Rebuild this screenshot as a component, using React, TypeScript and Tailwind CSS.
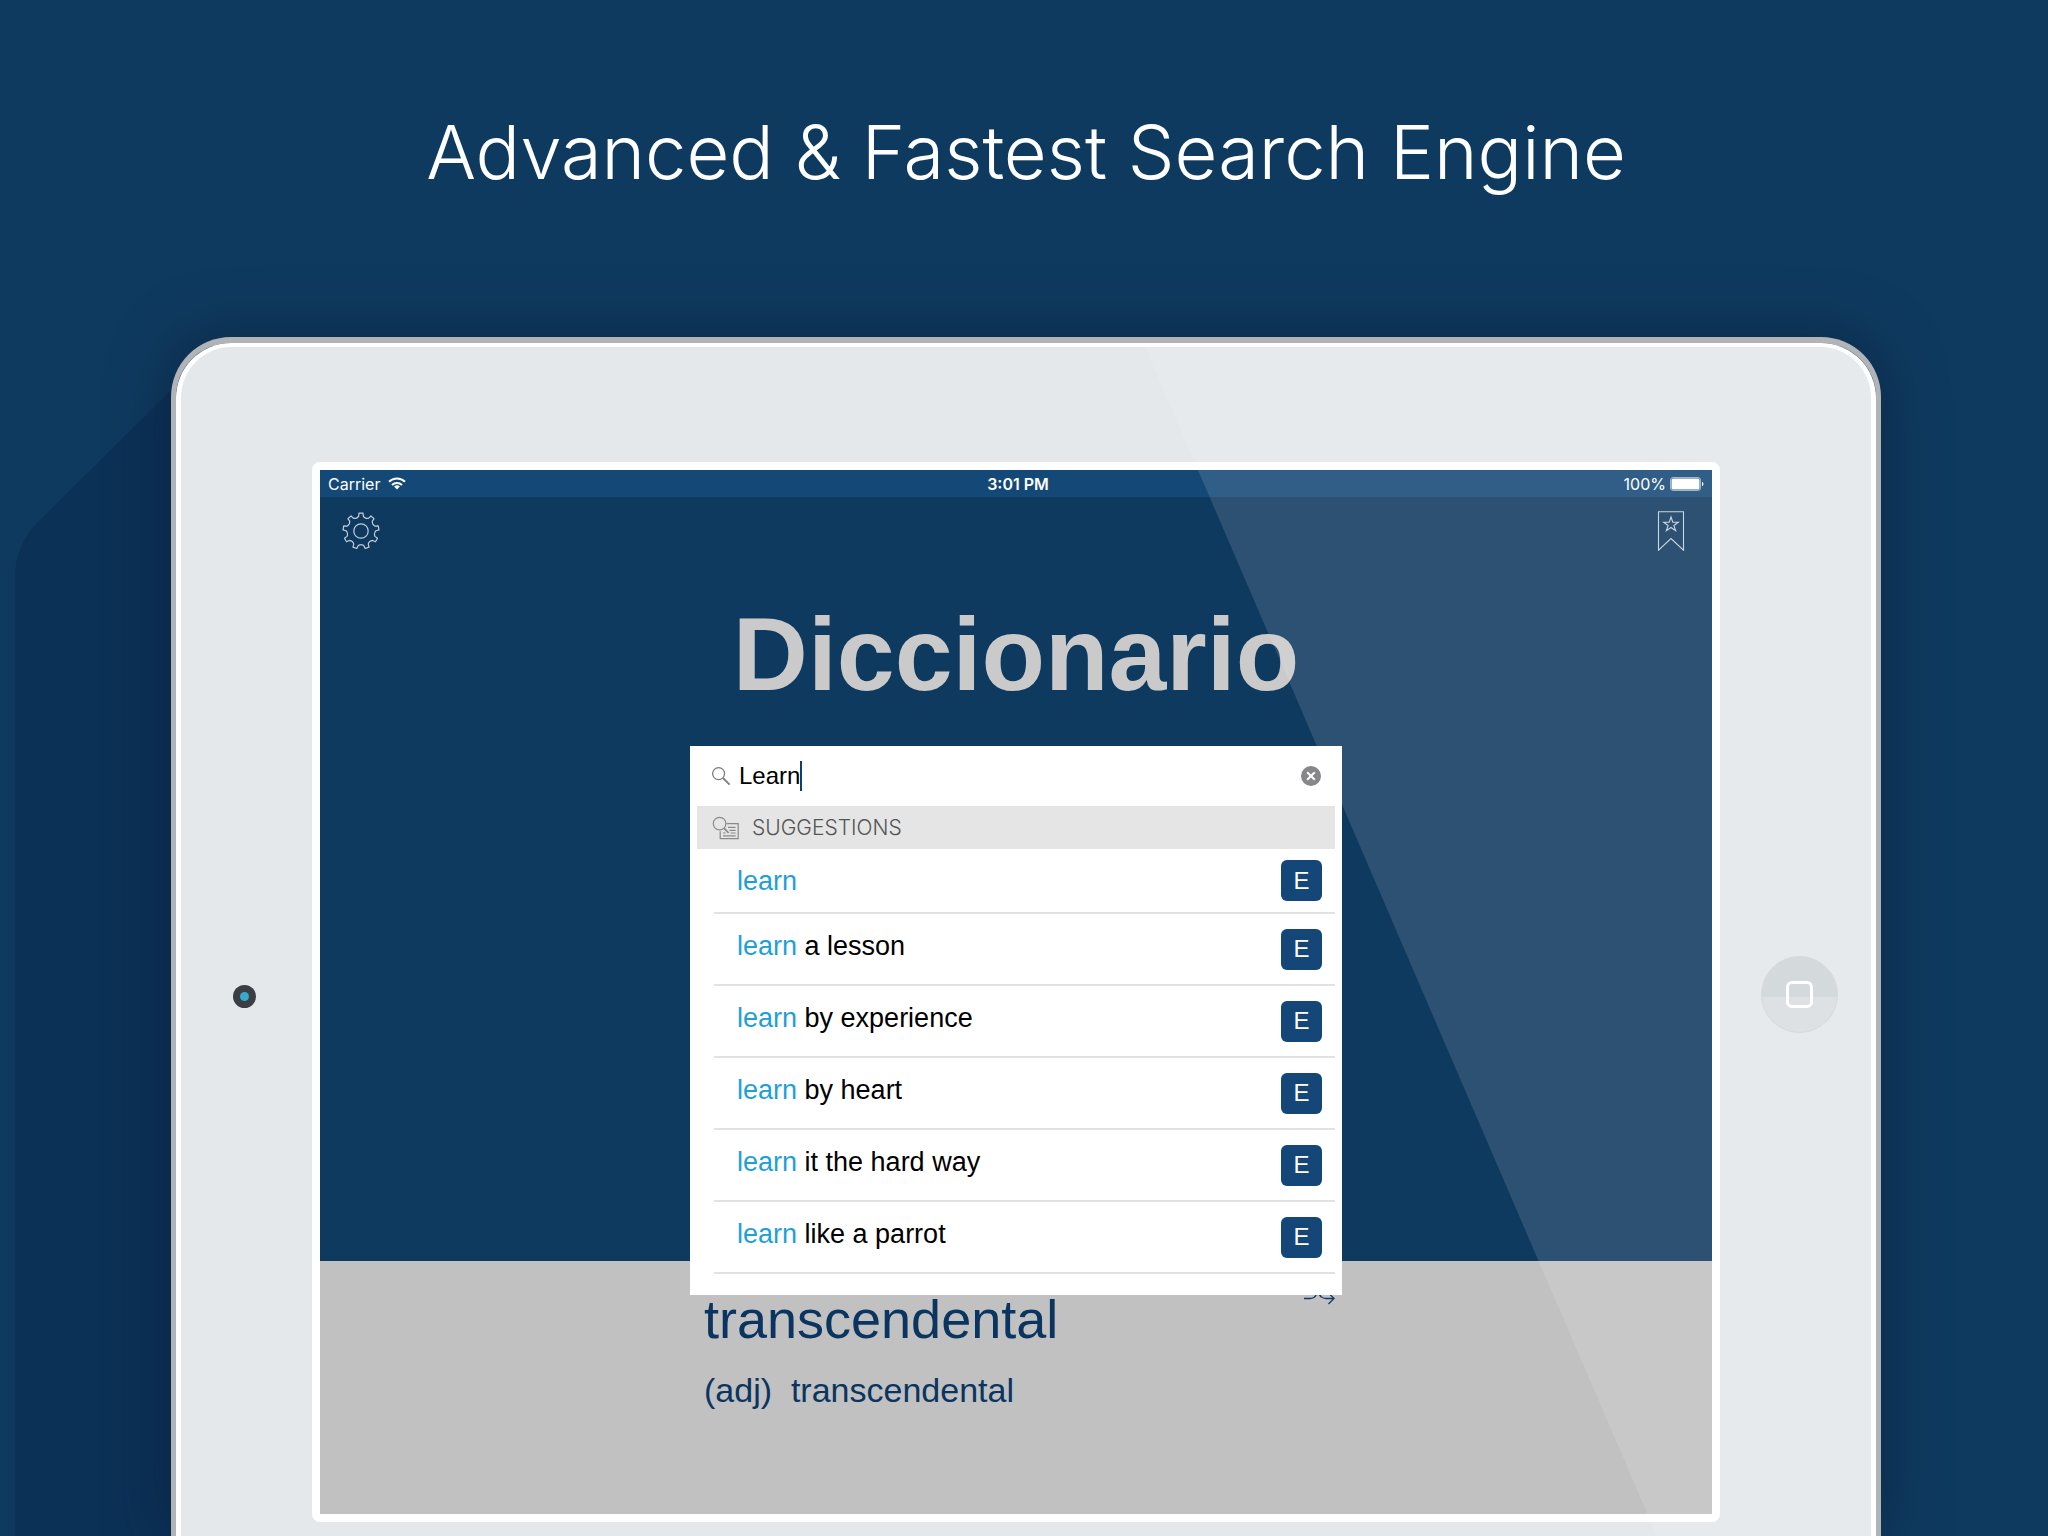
import { useState } from 'react';

const suggestions = ['', 'a lesson', 'by experience', 'by heart', 'it the hard way', 'like a parrot'];

// Outline of a nine-toothed gear centred on the origin
const gearPath = (): string => {
    const point = (radius: number, degrees: number) => {
        const angle = ((degrees - 90) * Math.PI) / 180;
        return `${(radius * Math.cos(angle)).toFixed(2)} ${(radius * Math.sin(angle)).toFixed(2)}`;
    };
    let path = '';
    for (let i = 0; i < 9; i++) {
        const a = i * 40;
        path += `${i === 0 ? 'M' : 'L'}${point(15, a - 9)} L${point(18, a - 6.5)} L${point(18, a + 6.5)} L${point(15, a + 9)} `;
        path += `Q${point(14.2, a + 12)} ${point(14, a + 15)} Q${point(13.4, a + 20)} ${point(14, a + 25)} Q${point(14.2, a + 28)} ${point(15, a + 31)} `;
    }
    return path + 'Z';
};

const GearIcon = () => (
    <svg viewBox="-20 -20 40 40" className="size-10" fill="none" stroke="#c3cedb" strokeLinejoin="round">
        <path d={gearPath()} strokeWidth="1.2" />
        <circle r="7.2" strokeWidth="1.2" />
    </svg>
);

const BookmarkIcon = () => (
    <svg viewBox="0 0 28 40" className="h-10 w-7" fill="none" stroke="#c6d0da" strokeWidth="1.1">
        <path d="M1.5 .8h25v38.4L14 27.6 1.5 39.2z" />
        <path d="M14 6l1.8 5.2h5.5l-4.4 3.3 1.7 5.2-4.6-3.2-4.6 3.2 1.7-5.2-4.4-3.3h5.5z" />
    </svg>
);

const WifiIcon = () => (
    <svg viewBox="0 0 18 13" className="h-[13px] w-[18px]" fill="none" stroke="white" strokeWidth="2">
        <path d="M1 4.8a11.5 11.5 0 0 1 16 0" />
        <path d="M4 8a7.2 7.2 0 0 1 10 0" />
        <path d="M9 12.6l-2.9-3a4.2 4.2 0 0 1 5.8 0z" fill="white" stroke="none" />
    </svg>
);

const BatteryIcon = () => (
    <svg viewBox="0 0 34 14" className="h-[14px] w-[34px]">
        <rect x=".5" y=".5" width="30" height="13" rx="2.5" fill="none" stroke="white" strokeOpacity=".55" />
        <rect x="1.5" y="1.5" width="28" height="11" rx="1.5" fill="white" />
        <path d="M32 4.8c2 .8 2 3.6 0 4.4z" fill="white" />
    </svg>
);

const SearchIcon = () => (
    <svg viewBox="0 0 20 20" className="size-5" fill="none" stroke="#7d7d80" strokeWidth="1.3">
        <circle cx="7.6" cy="7.6" r="6" />
        <path d="M12 12l6.6 6.6" strokeWidth="1.8" />
    </svg>
);

const SuggestionIcon = () => (
    <svg viewBox="0 0 28 24" className="h-6 w-7" fill="none" stroke="#8a8a8a" strokeWidth="1.2">
        <circle cx="7.6" cy="7.6" r="6.3" />
        <path d="M12 12.2l4.6 4.8" strokeWidth="1.8" />
        <path d="M14.4 7.6h11.8v15H8.2v-7.4" />
        <path d="M16 11.4h7.6M17.5 14.4h6.1M18.5 17h5.1M11 19.8h12.6M11 17h2.6" />
    </svg>
);

const ShuffleIcon = () => (
    <svg viewBox="0 0 32 26" className="h-[26px] w-8" fill="none" stroke="#0f3a66" strokeWidth="1.3">
        <path d="M1 19.5h6c3 0 5-1 6.5-4M17 16c1.500 2.500 3 3.500 6 3.500h8M1 6h6c8 0 8 10 11 12M17 10c2-3 4-4 6-4h8" />
        <path d="M26 1l5 5-5 5M25.500 14l5.500 5.500-5.500 5.500" />
    </svg>
);

const StatusBar = () => (
    <div className="grid h-[27px] grid-cols-3 items-center bg-[#144876] px-2 font-['Inter',sans-serif] text-base text-white">
        <div className="flex items-center gap-2">
            <span>Carrier</span>
            <WifiIcon />
        </div>
        <span className="pl-1 text-center font-semibold">3:01 PM</span>
        <div className="flex items-center justify-end gap-1">
            <span>100%</span>
            <BatteryIcon />
        </div>
    </div>
);

const SearchCard = () => {
    const [query, setQuery] = useState('Learn');

    return (
        <div className="relative z-10 mx-auto -mb-[34px] w-[652px] bg-white px-[7px] pb-[21px]">
            <div className="flex h-[60px] items-center px-[14px]">
                <label className="flex flex-1 items-center">
                    <SearchIcon />
                    <input
                        type="text"
                        aria-label="Search"
                        value={query}
                        onChange={(e) => setQuery(e.target.value)}
                        className="ml-2 field-sizing-content text-2xl text-black outline-none"
                    />
                    <span className="h-[30px] w-[2px] bg-[#0f3f72]" />
                </label>
                <button
                    type="button"
                    aria-label="Clear"
                    onClick={() => setQuery('')}
                    className="flex size-5 items-center justify-center rounded-full bg-[#87878a]"
                >
                    <svg viewBox="0 0 10 10" className="size-2.5" stroke="white" strokeWidth="2">
                        <path d="M1.2 1.2l7.6 7.6M8.8 1.2L1.2 8.8" />
                    </svg>
                </button>
            </div>

            <h2 className="flex h-[43px] items-center gap-3 bg-[#e5e5e5] pl-[15px] font-['Inter',sans-serif] text-[21px] font-light text-[#555]">
                <SuggestionIcon />
                SUGGESTIONS
            </h2>

            <ul className="pl-[17px]">
                {suggestions.map((rest) => (
                    <li key={rest} className="border-b-2 border-[#e2e2e2]">
                        <button
                            type="button"
                            className={`flex w-full items-center justify-between pr-[13px] pl-[23px] text-left text-[27px] leading-8 text-black ${
                                rest ? 'h-[70px]' : 'h-[63px]'
                            }`}
                        >
                            <span className={rest ? 'pb-1.5' : ''}>
                                <span className="text-[#1f9fd8]">learn</span> {rest}
                            </span>
                            <span className="flex size-[41px] items-center justify-center rounded-md bg-[#144777] text-2xl text-white">
                                E
                            </span>
                        </button>
                    </li>
                ))}
            </ul>
        </div>
    );
};

const Screen = () => (
    <main className="min-w-0 flex-1 rounded-lg border-8 border-white">
        <StatusBar />
        <section className="bg-[#0f3a5f]">
            <div className="flex items-start justify-between px-[21px] pt-[14px]">
                <button type="button" aria-label="Settings">
                    <GearIcon />
                </button>
                <button type="button" aria-label="Bookmarks" className="mr-1.5">
                    <BookmarkIcon />
                </button>
            </div>
            <h2 className="mt-[51px] mb-10 text-center text-[104px] leading-none font-bold text-[#cacaca]">Diccionario</h2>
            <SearchCard />
        </section>
        <section className="bg-[#c1c1c1] pt-[18px] pb-[104px] text-[#0a3560]">
            <div className="mx-auto w-[652px] pl-[14px]">
                <div className="flex items-start justify-between pr-[7px]">
                    <h3 className="pt-[10px] text-[54px] leading-[60px]">transcendental</h3>
                    <button type="button" aria-label="Shuffle">
                        <ShuffleIcon />
                    </button>
                </div>
                <p className="mt-[21px] text-[34px] leading-10 whitespace-pre">(adj)  transcendental</p>
            </div>
        </section>
    </main>
);

const App = () => {
    return (
        <div className="relative flex min-h-screen flex-col overflow-hidden bg-[#0f3a5f] font-['Liberation_Sans',Arial,sans-serif]">
            <h1 className="pt-28 pl-1 text-center font-['Inter',sans-serif] text-[74px] leading-[80px] font-light text-white">
                Advanced &amp; Fastest Search Engine
            </h1>

            <div className="relative mt-[145px] flex flex-1 flex-col pr-[167px] pl-[171px]">
                {/* Long shadow behind the device */}
                <svg viewBox="0 0 180 1199" preserveAspectRatio="xMinYMin slice" className="absolute top-0 left-0 h-full w-[180px]">
                    <path d="M180 44L38 185Q15 208 15 240V1199H180Z" fill="#0c3156" />
                </svg>

                <div className="relative flex flex-1 rounded-t-[60px] border-x-[5px] border-t-[6px] border-[#b1b4b7] shadow-[0_0_60px_rgba(8,28,54,0.6)]">
                    <div className="relative flex flex-1 items-start overflow-hidden rounded-t-[55px] border-x-[5px] border-t-4 border-white bg-[#e4e8eb] pt-[115px] pb-[14px]">
                        <div className="flex w-[131px] justify-center self-center pt-2">
                            <span className="mr-1 flex size-[23px] items-center justify-center rounded-full bg-[#3b3e42]">
                                <span className="size-[9px] rounded-full bg-[#35aaca]" />
                            </span>
                        </div>
                        <Screen />
                        <div className="flex w-[151px] justify-center self-center pt-1">
                            <button
                                type="button"
                                aria-label="Home"
                                className="ml-2 flex size-[77px] items-center justify-center rounded-full border border-[#d0d4d8] bg-linear-to-b from-[#cfd4d8] from-53% to-[#d9dde0] to-53%"
                            >
                                <span className="size-[27px] rounded-md border-[3px] border-white" />
                            </button>
                        </div>

                        {/* Glare across the glass */}
                        <svg
                            viewBox="0 0 1690 1189"
                            preserveAspectRatio="none"
                            className="pointer-events-none absolute inset-0 z-20 size-full"
                        >
                            <path d="M964 0H1690V1189H1476Z" fill="white" fillOpacity=".12" />
                        </svg>
                    </div>
                </div>
            </div>
        </div>
    );
};

export default App;
